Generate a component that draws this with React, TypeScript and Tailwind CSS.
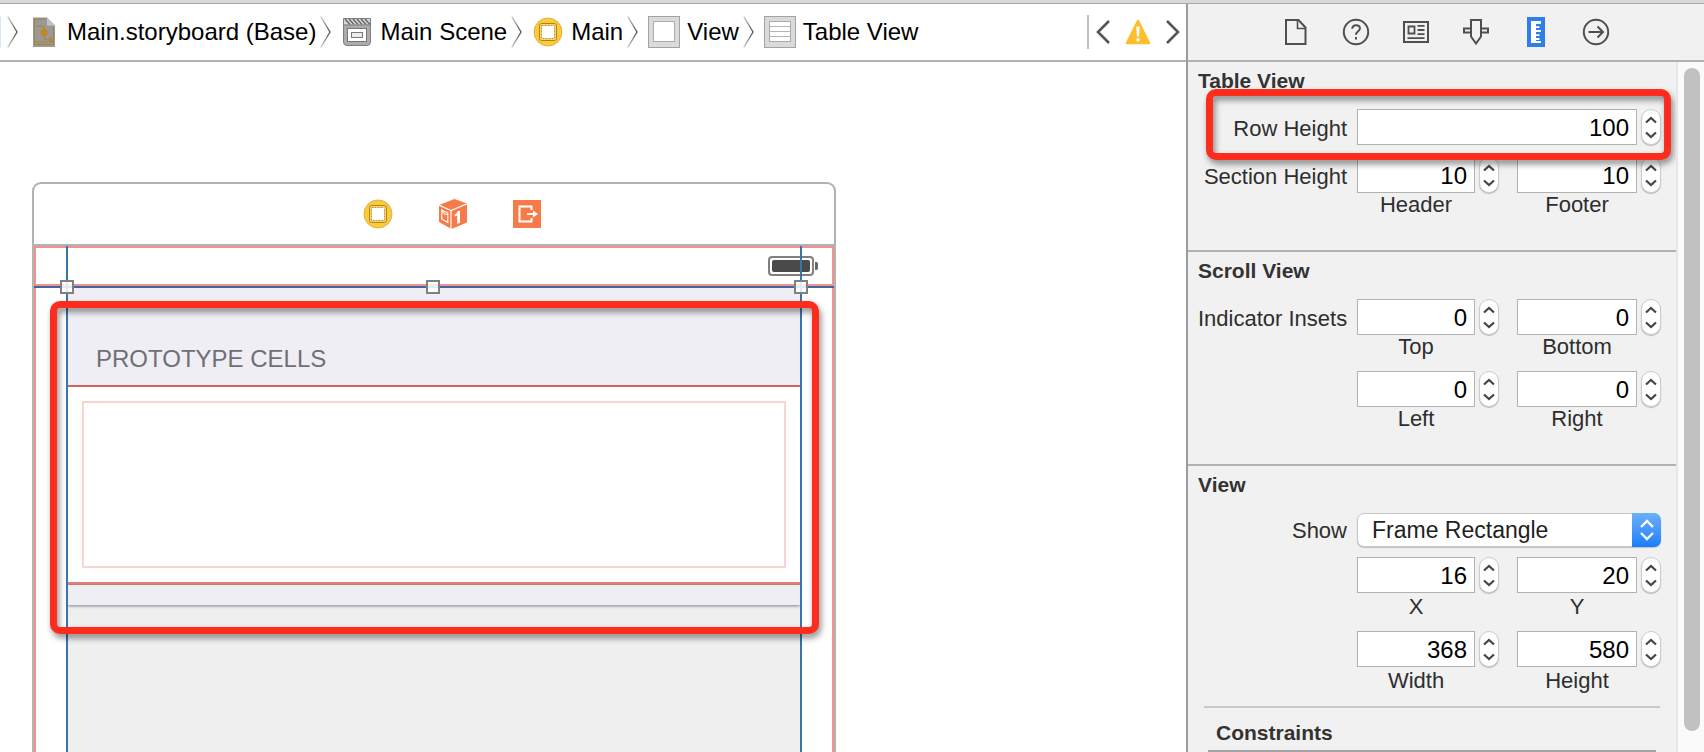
import React, { useId } from 'react';

/* ---------- Icons ---------- */

function StoryboardIcon() {
  return (
    <svg width="24" height="32" viewBox="0 0 24 32" aria-hidden="true">
      <path d="M1 1.5h14l8 8V31H1z" fill="#999" />
      <path d="M15 1.5l8 8h-8z" fill="#c2c2c2" />
      <path d="M13.5 3H2.500v25.500h19V11" fill="none" stroke="#a98338" strokeWidth="1" />
      <path d="M2.500 26h19M5 10.500h5.500q1.500 0 1.500 1.500v8q0 4 4 4h4M17.500 21.500l2.500 2.500-2.500 2.500" fill="none" stroke="#b3832a" strokeWidth="1.200" />
      <circle cx="12" cy="16.500" r="3.500" fill="#c5861c" />
    </svg>
  );
}

function ClapperIcon() {
  return (
    <svg width="28" height="28" viewBox="0 0 28 28" aria-hidden="true">
      <path d="M.5.5h27v23.500q0 3.500-3.500 3.500H4q-3.500 0-3.500-3.500z" fill="#acacac" stroke="#808080" />
      <path d="M1 1h26v5.500H1z" fill="#d6d6d6" />
      <path d="M2 1l5 5.500M6 1l5 5.500M10 1l5 5.500M14 1l5 5.500M18 1l5 5.500M22 1l5 5.500" stroke="#666" strokeWidth="1.400" />
      <path d="M1 7h26" stroke="#808080" />
      <rect x="4.500" y="10.500" width="19" height="13" fill="#fff" stroke="#777" />
      <rect x="8.500" y="14.500" width="11" height="5" fill="#ececec" stroke="#777" />
    </svg>
  );
}

function ControllerIcon() {
  return (
    <svg width="30" height="30" viewBox="0 0 30 30" aria-hidden="true">
      <circle cx="15" cy="15" r="14" fill="#fccb3a" stroke="#e3b044" />
      <rect x="6.500" y="6.500" width="17" height="17" rx="2" fill="#f9d468" stroke="#a98622" />
      <rect x="8.500" y="8.500" width="13" height="13" fill="#fff" stroke="#b59a4a" strokeDasharray="2 1" />
    </svg>
  );
}

function ViewIcon({ rows = false }: { rows?: boolean }) {
  return (
    <svg width="32" height="32" viewBox="0 0 32 32" aria-hidden="true">
      <rect x=".5" y=".5" width="31" height="31" fill="#dadada" stroke="#a3a3a3" />
      <rect x="5.500" y="5.500" width="21" height="20" fill="#fff" stroke="#ababab" />
      {rows && <path d="M6 10.500h20M6 15.500h20M6 20.500h20" stroke="#b5b5b5" />}
    </svg>
  );
}

function CrumbChevron() {
  return (
    <svg width="11" height="32" viewBox="0 0 11 32" className="shrink-0" aria-hidden="true">
      <defs>
        <linearGradient id="crumb-fade" x1="0" y1="0" x2="0" y2="1">
          <stop offset="0" stopColor="#ccc" />
          <stop offset=".5" stopColor="#555" />
          <stop offset="1" stopColor="#ccc" />
        </linearGradient>
      </defs>
      <path d="M.8.5L10 16 .8 31.500" fill="none" stroke="url(#crumb-fade)" strokeWidth="1.400" />
    </svg>
  );
}

function CubeIcon() {
  return (
    <svg width="28" height="30" viewBox="0 0 28 30" aria-hidden="true">
      <path d="M15.500 0L28 4.500v19L12.500 30 0 23V6z" fill="#f67b48" />
      <path d="M0 6l12 5.500L28 4.800M12 11.500V30" fill="none" stroke="#fff" strokeWidth="1.200" />
      <path d="M2.800 11l6 3v9.500l-6-3.500zM3 11.500l2.500 3.500 3.500.500" fill="none" stroke="#fff" strokeWidth="1.100" />
      <path d="M15.800 17.500v-2q2.200-.8 2.700-3l2.500-1v12.300l-2.800 1.200v-8.500z" fill="#fff" />
    </svg>
  );
}

function ExitIcon() {
  return (
    <svg width="28" height="28" viewBox="0 0 28 28" aria-hidden="true">
      <rect width="28" height="28" fill="#f67b48" />
      <path d="M18.500 10V6.500h-12v15h12V18" fill="none" stroke="#fff" strokeWidth="2" />
      <path d="M14 14h9" fill="none" stroke="#fff" strokeWidth="1.800" />
      <path d="M20 10.500l5 3.500-5 3.500z" fill="#fff" />
    </svg>
  );
}

function BatteryIcon() {
  return (
    <svg width="50" height="20" viewBox="0 0 50 20" aria-hidden="true">
      <rect x="1" y="1" width="44" height="18" rx="3" fill="#fff" stroke="#808080" strokeWidth="2" />
      <rect x="4" y="4" width="38" height="12" rx="2" fill="#4a4a4a" />
      <path d="M47 6h1.500q1.500 0 1.500 2v4q0 2-1.500 2H47z" fill="#666" />
    </svg>
  );
}

function WarningIcon() {
  return (
    <svg width="26" height="26" viewBox="0 0 26 26" aria-hidden="true">
      <path d="M13 2L24 24H2z" fill="#fdbe30" stroke="#fdbe30" strokeWidth="2.500" strokeLinejoin="round" />
      <path d="M11.200 7.500h3.600l-.8 10h-2z" fill="#fff" />
      <circle cx="13" cy="20.800" r="1.800" fill="#fff" />
    </svg>
  );
}

const inspectorTabs = [
  {
    name: 'File inspector',
    icon: (
      <>
        <path d="M5 3h12.500l7 7.500V27H5z" />
        <path d="M16.500 3v8.500h8" strokeWidth="1.600" />
      </>
    ),
  },
  {
    name: 'Quick help',
    icon: (
      <>
        <circle cx="15" cy="15" r="12.200" />
        <path d="M11.300 11.800q0-3.600 3.800-3.600t3.800 3.300c0 2.600-3.900 3-3.900 6.200M15 20v2.400" />
      </>
    ),
  },
  {
    name: 'Identity inspector',
    icon: (
      <>
        <path d="M3 5h24v20H3z" />
        <path d="M7.500 9.500h6v7h-6zM16.500 8.800h7M16.500 13h7M16.500 17.200h7M6.500 21.200h17" strokeWidth="1.800" />
      </>
    ),
  },
  {
    name: 'Attributes inspector',
    icon: (
      <path d="M10 3h10v16.500L15 26.500l-5-7zM10 11.500H3v4h7M20 11.500h7v4h-7" />
    ),
  },
  { name: 'Size inspector', icon: null },
  {
    name: 'Connections inspector',
    icon: (
      <>
        <circle cx="15" cy="15" r="12.200" />
        <path d="M7.500 15h14M16.500 9.500L22 15l-5.500 5.500" />
      </>
    ),
  },
];

function RulerIcon() {
  return (
    <svg width="30" height="30" viewBox="0 0 30 30" aria-hidden="true">
      <path d="M6 0h18v30H6z" fill="#2f7fea" />
      <path d="M10 4h10v3h-5v2.200h3.500v1.800H15v2h5v2h-5v2.200h3.500V19H15v2h3.500v2H15v1h5v2H10z" fill="#fff" />
    </svg>
  );
}

/* ---------- Jump bar ---------- */

const crumbs = [
  { label: 'Main.storyboard (Base)', icon: <StoryboardIcon /> },
  { label: 'Main Scene', icon: <ClapperIcon /> },
  { label: 'Main', icon: <ControllerIcon /> },
  { label: 'View', icon: <ViewIcon /> },
  { label: 'Table View', icon: <ViewIcon rows /> },
];

function JumpBar() {
  return (
    <header className="flex h-[58px] shrink-0 items-center border-b-2 border-[#b2b2b2] bg-white">
      <span className="mr-1.5 h-8 w-px bg-[#d3e9f5]" />
      <nav aria-label="Jump bar" className="flex flex-1 items-center overflow-hidden">
        {crumbs.map((crumb) => (
          <a key={crumb.label} href="#" className="mr-1 flex items-center whitespace-nowrap">
            <CrumbChevron />
            <span className="mr-[7px] ml-[10px] flex w-8 shrink-0 justify-center">{crumb.icon}</span>
            <span className="text-[24px] leading-8 text-black">{crumb.label}</span>
          </a>
        ))}
      </nav>
      <div className="flex items-center border-l-2 border-[#c0c0c0] py-1 pr-[5px] pl-[6px]">
        <button type="button" aria-label="Previous issue">
          <svg width="16" height="26" viewBox="0 0 16 26" aria-hidden="true">
            <path d="M14 2L3 13l11 11" fill="none" stroke="#555" strokeWidth="2.600" />
          </svg>
        </button>
        <button type="button" aria-label="Show issues" className="mx-[14px]">
          <WarningIcon />
        </button>
        <button type="button" aria-label="Next issue">
          <svg width="16" height="26" viewBox="0 0 16 26" aria-hidden="true">
            <path d="M2 2l11 11L2 24" fill="none" stroke="#555" strokeWidth="2.600" />
          </svg>
        </button>
      </div>
    </header>
  );
}

/* ---------- Canvas ---------- */

const highlight =
  'pointer-events-none absolute rounded-[10px] border-[7px] border-[#fe2c1c] drop-shadow-[2px_4px_3px_rgba(0,0,0,0.45)]';

function Canvas() {
  return (
    <div className="flex min-h-0 flex-1 overflow-hidden bg-white pt-[120px] pl-8">
      <div className="flex w-[804px] shrink-0 flex-col rounded-t-[9px] border-2 border-b-0 border-[#b2b2b2]">
        <div className="flex h-[62px] shrink-0 items-center justify-center gap-[46px] border-b-2 border-[#b2b2b2] pl-9">
          <ControllerIcon />
          <CubeIcon />
          <ExitIcon />
        </div>

        <div className="relative flex min-h-[506px] flex-1 flex-col border-x-2 border-t-2 border-[#f0938e]">
          <div className="flex h-[38px] shrink-0 items-center justify-end border-b-2 border-[#f0938e] pr-[14px]">
            <BatteryIcon />
          </div>
          <div className="mt-0.5 mr-8 ml-8 flex flex-1 flex-col bg-[#efefef]">
            <h3 className="flex h-[99px] shrink-0 items-end border-b-2 border-[#d0655f] bg-[#efeef4] pb-[11px] pl-7 text-[24px] leading-[30px] text-[#6f6f75]">
              PROTOTYPE CELLS
            </h3>
            <div className="h-[198px] shrink-0 border-b-[3px] border-[#e87f78] bg-white px-[14px] pt-[14px] pb-[14px]">
              <div className="h-full border-2 border-[#f9d5d2]" />
            </div>
            <div className="h-5 shrink-0 bg-[#efeef4] shadow-[0_1px_3px_rgba(0,0,0,0.45)]" />
          </div>

          {/* Selection guides and resize handles */}
          <div className="absolute inset-y-0 left-[30px] -top-0.5 w-0.5 bg-[#3974ab]" />
          <div className="absolute inset-y-0 right-[30px] -top-0.5 w-0.5 bg-[#3974ab]" />
          <div className="absolute -inset-x-0.5 top-[38px] h-0.5 bg-[#41669f]" />
          <div className="absolute top-8 left-6 size-[14px] border-2 border-[#808080] bg-white/85" />
          <div className="absolute top-8 left-1/2 -ml-2 size-[14px] border-2 border-[#808080] bg-white/85" />
          <div className="absolute top-8 right-6 size-[14px] border-2 border-[#808080] bg-white/85" />
          <div className={`${highlight} top-[53px] right-[13px] left-[14px] h-[333px]`} />
        </div>
      </div>
    </div>
  );
}

/* ---------- Inspector ---------- */

function Stepper({ label }: { label: string }) {
  return (
    <div className="flex h-9 w-5 shrink-0 flex-col rounded-full border border-[#cdcdcd] bg-white shadow-[0_1px_1px_rgba(0,0,0,0.25)]">
      <button type="button" aria-label={`Increase ${label}`} className="flex flex-1 items-end justify-center pb-[3px]">
        <svg width="12" height="8" viewBox="0 0 12 8" aria-hidden="true">
          <path d="M1 6.500L6 2l5 4.500" fill="none" stroke="#444" strokeWidth="2.200" />
        </svg>
      </button>
      <button type="button" aria-label={`Decrease ${label}`} className="flex flex-1 items-start justify-center pt-[4px]">
        <svg width="12" height="8" viewBox="0 0 12 8" aria-hidden="true">
          <path d="M1 1.500L6 6l5-4.500" fill="none" stroke="#444" strokeWidth="2.200" />
        </svg>
      </button>
    </div>
  );
}

function NumberBox({ id, value }: { id: string; value: number }) {
  return (
    <input
      id={id}
      type="text"
      inputMode="numeric"
      defaultValue={value}
      className="h-9 w-full min-w-0 border border-[#b3b3b3] bg-white pt-0.5 pr-[7px] text-right text-[24px] leading-8 text-black outline-none"
    />
  );
}

function Field({ label, value, spaced = false }: { label: string; value: number; spaced?: boolean }) {
  const id = useId();
  return (
    <div className="flex gap-1">
      <div className="flex min-w-0 flex-1 flex-col">
        <NumberBox id={id} value={value} />
        <label htmlFor={id} className={`text-center text-[22px] leading-6 ${spaced ? 'mt-0.5' : ''}`}>
          {label}
        </label>
      </div>
      <Stepper label={label} />
    </div>
  );
}

const rowLabel = 'w-[149px] shrink-0 text-right text-[22px] leading-10 whitespace-nowrap h-9';

function Pair({
  label,
  fields,
  spaced,
}: {
  label?: string;
  fields: [string, number][];
  spaced?: boolean;
}) {
  return (
    <div className="flex gap-[10px]" role="group" aria-label={label}>
      <span className={rowLabel}>{label}</span>
      <div className="grid flex-1 grid-cols-[142fr_144fr] gap-[18px]">
        {fields.map(([name, value]) => (
          <Field key={name} label={name} value={value} spaced={spaced} />
        ))}
      </div>
    </div>
  );
}

function Section({ title, children, last = false }: { title: string; children: React.ReactNode; last?: boolean }) {
  return (
    <section
      className={`relative flex shrink-0 flex-col gap-3 pt-[7px] pr-[15px] pl-[10px] ${
        last ? '' : 'border-b-2 border-[#b2b2b2] pb-[33px]'
      }`}
    >
      <h2 className="mb-1 text-[21px] leading-6 font-bold text-[#333]">{title}</h2>
      {children}
    </section>
  );
}

function Inspector() {
  return (
    <aside className="flex w-[518px] shrink-0 flex-col border-l-2 border-[#9c9c9c] bg-[#f1f1f1] text-[#2e2e2e]">
      <div role="tablist" className="flex h-[58px] shrink-0 items-center justify-center gap-[30px] border-b-2 border-[#b2b2b2]">
        {inspectorTabs.map((tab) => (
          <button key={tab.name} type="button" role="tab" aria-label={tab.name} aria-selected={tab.icon === null}>
            {tab.icon === null ? (
              <RulerIcon />
            ) : (
              <svg width="30" height="30" viewBox="0 0 30 30" fill="none" stroke="#4f4f4f" strokeWidth="2" aria-hidden="true">
                {tab.icon}
              </svg>
            )}
          </button>
        ))}
      </div>

      <div className="flex min-h-0 flex-1">
        <div className="flex min-w-0 flex-1 flex-col overflow-hidden">
          <Section title="Table View">
            <div className="flex gap-[10px]">
              <label htmlFor="row-height" className={rowLabel}>
                Row Height
              </label>
              <div className="flex flex-1 gap-1">
                <NumberBox id="row-height" value={100} />
                <Stepper label="Row Height" />
              </div>
            </div>
            <Pair label="Section Height" fields={[['Header', 10], ['Footer', 10]]} />
            <div className={`${highlight} top-[27px] right-[5px] left-[18px] h-[71px]`} />
          </Section>

          <Section title="Scroll View">
            <Pair label="Indicator Insets" fields={[['Top', 0], ['Bottom', 0]]} />
            <Pair fields={[['Left', 0], ['Right', 0]]} />
          </Section>

          <Section title="View" last>
            <div className="-mb-0.5 flex gap-[10px]">
              <label htmlFor="show" className="h-[34px] w-[149px] shrink-0 text-right text-[22px] leading-9">
                Show
              </label>
              <div className="relative flex-1">
                <select
                  id="show"
                  className="h-[34px] w-full appearance-none rounded-[7px] border border-[#c6c6c6] bg-white pl-[14px] text-[23px] leading-8 text-[#1f1f1f] shadow-[0_1px_1px_rgba(0,0,0,0.2)] outline-none"
                >
                  <option>Frame Rectangle</option>
                </select>
                <span className="pointer-events-none absolute inset-y-0 right-0 flex w-[29px] items-center justify-center rounded-r-[7px] bg-linear-to-b from-[#6bb0f9] to-[#167dfb]">
                  <svg width="16" height="22" viewBox="0 0 16 22" aria-hidden="true">
                    <path d="M2 8l6-6 6 6M2 14l6 6 6-6" fill="none" stroke="#fff" strokeWidth="2.400" />
                  </svg>
                </span>
              </div>
            </div>
            <Pair spaced fields={[['X', 16], ['Y', 20]]} />
            <Pair spaced fields={[['Width', 368], ['Height', 580]]} />
          </Section>

          <section className="mt-[13px] mr-4 ml-4 flex shrink-0 flex-col border-t-2 border-[#c9c9c9] pt-[13px]">
            <h2 className="ml-3 text-[21px] leading-6 font-bold text-[#333]">Constraints</h2>
            <div className="mt-[5px] mr-1 ml-1 h-0.5 bg-[#a3a3a3]" />
          </section>
        </div>
        <div className="flex w-7 shrink-0 flex-col border-l-2 border-[#e6e6e6] bg-[#fafafa] pt-1.5 pr-1 pb-[21px] pl-1.5">
          <div className="w-4 flex-1 rounded-full bg-[#c1c1c1]" />
        </div>
      </div>
    </aside>
  );
}

export default function App() {
  return (
    <div className="flex h-screen flex-col overflow-hidden bg-white font-['Liberation_Sans',Arial,sans-serif]">
      <div className="h-1 shrink-0 border-b border-[#a8a8a8] bg-[#d9d9d9]" />
      <div className="flex min-h-0 flex-1">
        <main className="flex min-w-0 flex-1 flex-col">
          <JumpBar />
          <Canvas />
        </main>
        <Inspector />
      </div>
    </div>
  );
}
